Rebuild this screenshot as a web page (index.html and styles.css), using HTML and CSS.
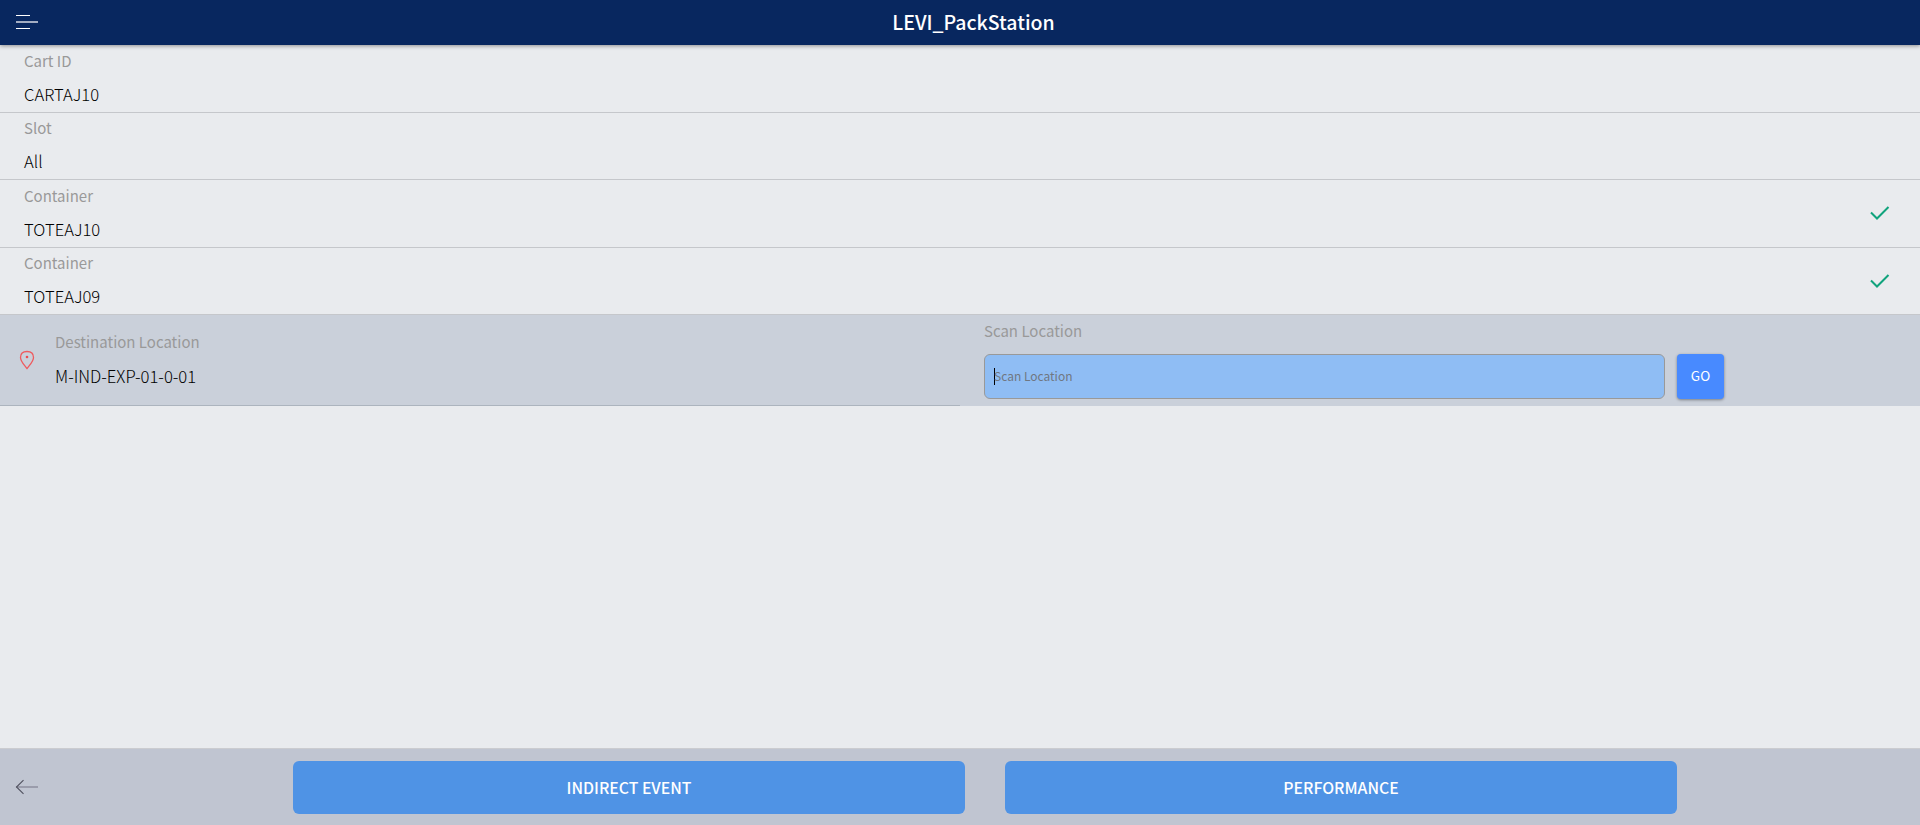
FILE: index.html
```html
<!DOCTYPE html>
<html lang="en">
<head>
<meta charset="utf-8">
<title>LEVI_PackStation</title>
<link rel="stylesheet" href="styles.css">
</head>
<body>
<div class="app">
  <header class="header">
    <svg class="menu" width="26" height="18" viewBox="0 0 26 18" shape-rendering="crispEdges">
      <path d="M2 2h14v1H2zM2 15h14v1H2z" fill="#fff"/>
      <path d="M2 8h22v2H2z" fill="#a3adc2"/>
    </svg>
    <h1 class="title">LEVI_PackStation</h1>
  </header>
  <main class="content">
    <section class="row"><div class="field"><span class="label">Cart ID</span><span class="value">CARTAJ10</span></div></section>
    <section class="row"><div class="field"><span class="label">Slot</span><span class="value">All</span></div></section>
    <section class="row row-tall"><div class="field"><span class="label">Container</span><span class="value">TOTEAJ10</span></div>
      <svg class="check" width="20" height="16" viewBox="0 0 20 16"><path d="M1 7.500 7 13.500 18.500 2" fill="none" stroke="#10a37c" stroke-width="2"/></svg></section>
    <section class="row"><div class="field"><span class="label">Container</span><span class="value">TOTEAJ09</span></div>
      <svg class="check" width="20" height="16" viewBox="0 0 20 16"><path d="M1 7.500 7 13.500 18.500 2" fill="none" stroke="#10a37c" stroke-width="2"/></svg></section>
    <section class="active">
      <div class="destination">
        <svg class="pin" width="16" height="20" viewBox="0 0 16 20"><path d="M8 18.500C5.600 15.200 1.500 11.500 1.500 7.400 1.500 3.800 4.100 1.500 8 1.500s6.500 2.300 6.500 5.900C14.500 11.500 10.400 15.200 8 18.500z" fill="none" stroke="#ee5b5f" stroke-width="1.300"/><circle cx="8" cy="7" r="1.300" fill="#ee4b50"/></svg>
        <div class="field"><span class="label">Destination Location</span><span class="value">M-IND-EXP-01-0-01</span></div>
      </div>
      <div class="scan">
        <span class="label">Scan Location</span>
        <div class="scan-line">
          <div class="input"><span class="caret"></span><span class="placeholder">Scan Location</span></div>
          <button class="go">GO</button>
        </div>
      </div>
    </section>
  </main>
  <footer class="footer">
    <svg class="back" width="24" height="16" viewBox="0 0 24 16"><path d="M1 7h22v2H1z" fill="#9a9cab"/><path d="M8.500 1.200 1.500 8l7 6.800" fill="none" stroke="#50525f" stroke-width="1.100"/></svg>
    <div class="actions"><button class="action">INDIRECT EVENT</button><button class="action">PERFORMANCE</button></div>
  </footer>
</div>
</body>
</html>
```
FILE: styles.css
```css
* { box-sizing: border-box; }
body { margin: 0; font-family: "Noto Sans CJK SC", "Noto Sans", sans-serif; color: #222428; background: #e9ebee; }
.app { display: flex; flex-direction: column; height: 825px; overflow: hidden; }
.header { display: grid; grid-template-columns: 127px 1fr 100px; align-items: center; height: 45px; background: #08275f; box-shadow: 0 1px 4px rgba(0, 0, 0, .4); z-index: 1; }
.menu { margin-left: 14px; margin-top: -1px; }
.title { margin: 0; text-align: center; color: #fff; font-size: 19.500px; font-weight: 500; line-height: 43px; height: 45px; }
.content { flex: 1; }
.row { display: flex; align-items: center; justify-content: space-between; height: 67px; padding: 0 30px 0 24px; border-bottom: 1px solid #c5c7cb; }
.row:first-child, .row-tall { height: 68px; }
.field { display: flex; flex-direction: column; padding-bottom: 2px; }
.label { color: #999; font-size: 15px; font-weight: 400; line-height: 32px; }
.value { color: #000; font-size: 16.600px; font-weight: 300; line-height: 34px; }
.check { display: block; margin-top: -1px; }
.active { display: grid; grid-template-columns: 960px 1fr; height: 91px; background: #cad0da; }
.destination { display: flex; align-items: center; padding-left: 19px; border-bottom: 1px solid #acb4be; }
.destination .field { margin-left: 20px; padding-bottom: 2px; }
.destination .label { line-height: 34px; }
.destination .value { font-size: 16.700px; }
.scan { padding-left: 24px; }
.scan > .label { display: block; height: 39px; line-height: 32px; }
.scan-line { display: flex; gap: 12px; }
.input { display: flex; align-items: center; width: 681px; height: 45px; padding-left: 9px; background: #8fbdf4; border: 1px solid #999; border-radius: 6px; }
.caret { width: 1px; height: 17px; background: #000; }
.placeholder { margin: 0 0 2px -1px; color: #6f7782; font-size: 12px; font-weight: 400; }
.go { width: 47px; height: 45px; padding: 0 0 3px; border: 0; border-radius: 4px; background: #488aff; color: #fff; font: 400 13.500px "Noto Sans CJK SC", sans-serif; box-shadow: 0 1px 3px rgba(0, 0, 0, .4); }
.footer { display: flex; align-items: center; height: 77px; border-top: 1px solid #cbccd0; background: #c0c5d1; }
.back { margin-left: 15px; }
.actions { display: flex; gap: 40px; margin-left: 254px; }
.action { width: 672px; height: 53px; padding: 0; border: 0; border-radius: 6px; background: #4f93e5; color: #fff; font: 500 15.800px "Noto Sans CJK SC", sans-serif; }
```
